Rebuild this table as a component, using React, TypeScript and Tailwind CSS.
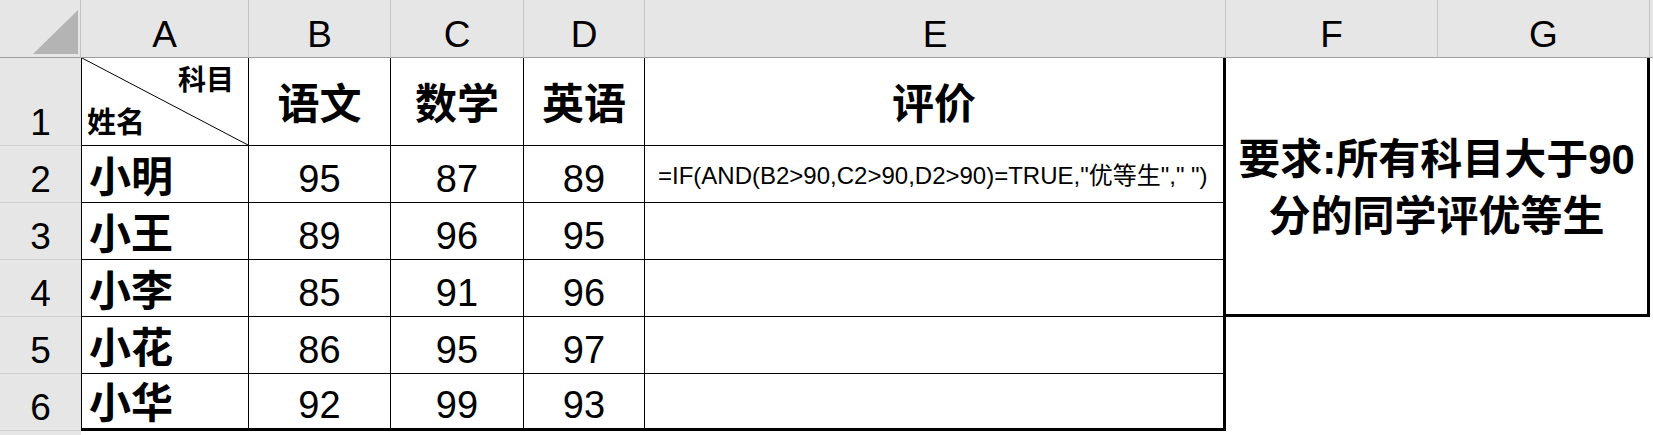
import React from "react";

const cols = ["A", "B", "C", "D", "E", "F", "G"];
const data: [string, number, number, number][] = [
  ["小明", 95, 87, 89],
  ["小王", 89, 96, 95],
  ["小李", 85, 91, 96],
  ["小花", 86, 95, 97],
  ["小华", 92, 99, 93],
];

export default function App() {
  return (
    <div className="w-[1653px] h-[435px] overflow-hidden bg-white text-black font-[family-name:Liberation_Sans,Noto_Sans_CJK_SC,sans-serif] grid grid-cols-[81px_168px_142px_133px_121px_581px_212px_212px_3px] grid-rows-[58px_88px_57px_57px_57px_57px_57px_4px]">
      {/* header row */}
      <div className="relative bg-[#e6e6e6] border-r border-b border-r-[#c4c4c4] border-b-[#9e9e9e]">
        <svg className="absolute inset-0" width="80" height="57" viewBox="0 0 80 57">
          <polygon points="78,10 78,54 33,54" fill="#b4b4b4" />
        </svg>
      </div>
      {cols.map((c) => (
        <div
          key={c}
          className="bg-[#e6e6e6] border-r border-b border-r-[#c4c4c4] border-b-[#9e9e9e] flex items-end justify-center pb-[4px] text-[37px] leading-none"
        >
          {c}
        </div>
      ))}
      <div className="bg-[#e6e6e6] border-b border-b-[#9e9e9e]" />

      {/* row 1 */}
      <div className="bg-[#e6e6e6] border-b border-[#cfcfcf] flex items-end justify-center pb-[4px] text-[37px] leading-none">
        1
      </div>
      <div className="relative border-l border-r border-b border-black flex flex-col justify-between">
        <svg className="absolute inset-0 w-full h-full" preserveAspectRatio="none" viewBox="0 0 100 100">
          <line x1="0" y1="0" x2="100" y2="100" stroke="black" strokeWidth="1" vectorEffect="non-scaling-stroke" />
        </svg>
        <div className="self-end pr-[14px] pt-[9px] text-[28px] font-bold leading-none">科目</div>
        <div className="self-start pl-[5px] pb-[7px] text-[29px] font-bold leading-none">姓名</div>
      </div>
      {["语文", "数学", "英语"].map((t) => (
        <div
          key={t}
          className="border-r border-b border-black flex items-center justify-center pt-[7px] text-[42px] font-bold leading-none"
        >
          {t}
        </div>
      ))}
      <div className="border-r-[3px] border-b border-black flex items-center justify-center pt-[7px] text-[42px] font-bold leading-none">
        评价
      </div>
      <div className="col-span-2 row-span-4 border-r-[3px] border-b-[3px] border-black flex flex-col items-center justify-center pt-[4px] text-[42px] font-bold leading-[57px]">
        <div>要求:所有科目大于90</div>
        <div>分的同学评优等生</div>
      </div>
      <div />

      {/* rows 2-6 */}
      {data.map((row, i) => {
        const last = i === data.length - 1;
        const bb = last ? "border-b-[3px]" : "border-b";
        return (
          <React.Fragment key={row[0]}>
            <div className="bg-[#e6e6e6] border-b border-[#cfcfcf] flex items-end justify-center pb-[4px] text-[37px] leading-none">
              {i + 2}
            </div>
            <div className={`border-l border-r ${bb} border-black flex items-end pl-[7px] pb-[3px] text-[42px] font-bold leading-none`}>
              {row[0]}
            </div>
            {[row[1], row[2], row[3]].map((n, j) => (
              <div
                key={j}
                className={`border-r ${bb} border-black flex items-end justify-center pb-[4px] text-[38px] leading-none`}
              >
                {n}
              </div>
            ))}
            <div className={`border-r-[3px] ${bb} border-black flex items-center pl-[13px] pt-[3px] text-[24px] leading-none whitespace-nowrap`}>
              {i === 0 ? '=IF(AND(B2>90,C2>90,D2>90)=TRUE,"优等生"," ")' : ""}
            </div>
            {i >= 3 ? (
              <>
                <div />
                <div />
              </>
            ) : null}
            <div />
          </React.Fragment>
        );
      })}

      {/* partial row 7 */}
      <div className="bg-[#e6e6e6]" />
      <div className="col-span-8" />
    </div>
  );
}
